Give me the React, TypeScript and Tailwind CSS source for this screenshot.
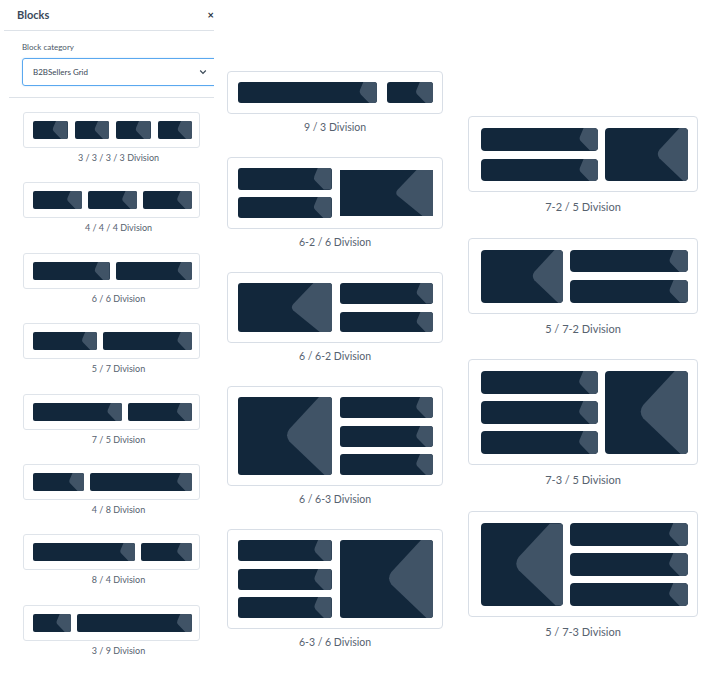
import { FC, ReactNode } from 'react';

type Tip = 'bar' | 'block' | 'wide';

const tipPaths: Record<Tip, string> = {
  bar: 'M36 0 L20 38 Q15 50 24 59 L64 100 L101 100 L101 0 Z',
  block: 'M84 0 L46 41 Q40 49 46 57 L91 100 L101 100 L101 0 Z',
  wide: 'M63 0 L22 43 Q16 50 22 56 L76 100 L101 100 L101 0 Z',
};

const Box: FC<{ tip?: Tip; className?: string }> = ({ tip = 'bar', className = '' }) => (
  <div className={`relative overflow-hidden bg-[#12273b] ${className}`}>
    <svg
      className="absolute inset-0 h-full w-full"
      viewBox="0 0 100 100"
      preserveAspectRatio="xMaxYMid meet"
    >
      <path d={tipPaths[tip]} fill="#405366" />
    </svg>
  </div>
);

const Stack: FC<{ count: number; gap: string; rounded: string; className?: string }> = ({
  count,
  gap,
  rounded,
  className = 'flex-1',
}) => (
  <div className={`flex flex-col ${gap} ${className}`}>
    {Array.from({ length: count }).map((_, i) => (
      <Box key={i} className={`flex-1 ${rounded}`} />
    ))}
  </div>
);

// flex-grow classes for the 12 column spans
const grow: Record<number, string> = {
  3: 'flex-[3]',
  4: 'flex-[4]',
  5: 'flex-[5]',
  6: 'flex-[6]',
  7: 'flex-[7]',
  8: 'flex-[8]',
  9: 'flex-[9]',
};

const SmallCard: FC<{ spans: number[]; label: string }> = ({ spans, label }) => (
  <div className="mb-[17.4px]">
    <div className="w-[177px] rounded-[3px] border border-[#dfe4ea] py-[8px] pl-[9px] pr-[7px]">
      <div className={`flex h-[18px] ${spans.length === 4 ? 'gap-[7px]' : 'gap-[6px]'}`}>
        {spans.map((s, i) => (
          <Box key={i} className={`${grow[s]} rounded-[2px]`} />
        ))}
      </div>
    </div>
    <div className="mt-[3px] text-center text-[9px] leading-[14px] text-[#56626f]">{label}</div>
  </div>
);

const MidCard: FC<{ label: string; h: string; gap?: string; children: ReactNode }> = ({
  label,
  h,
  gap = 'gap-[8px]',
  children,
}) => (
  <div className="mb-[22px]">
    <div className="rounded-[4px] border border-[#d8dee6] py-[10px] pl-[10px] pr-[9px]">
      <div className={`flex ${gap} ${h}`}>{children}</div>
    </div>
    <div className="mt-[5px] text-center text-[10.5px] leading-[16px] text-[#56626f]">{label}</div>
  </div>
);

const BigCard: FC<{ label: string; h: string; children: ReactNode }> = ({ label, h, children }) => (
  <div className="mb-[22.5px]">
    <div className="rounded-[4px] border border-[#d8dee6] pt-[11px] pb-[10px] pl-[12px] pr-[9px]">
      <div className={`flex gap-[7px] ${h}`}>{children}</div>
    </div>
    <div className="mt-[6px] text-center text-[11px] leading-[17px] text-[#56626f]">{label}</div>
  </div>
);

const smallItems: { spans: number[]; label: string }[] = [
  { spans: [3, 3, 3, 3], label: '3 / 3 / 3 / 3 Division' },
  { spans: [4, 4, 4], label: '4 / 4 / 4 Division' },
  { spans: [6, 6], label: '6 / 6 Division' },
  { spans: [5, 7], label: '5 / 7 Division' },
  { spans: [7, 5], label: '7 / 5 Division' },
  { spans: [4, 8], label: '4 / 8 Division' },
  { spans: [8, 4], label: '8 / 4 Division' },
  { spans: [3, 9], label: '3 / 9 Division' },
];

export default function App() {
  return (
    <div className="flex h-[675px] w-[714px] overflow-hidden bg-white font-[Lato,sans-serif] text-[#3a4856]">
      {/* sidebar */}
      <aside className="w-[214px] shrink-0 overflow-hidden">
        <div className="ml-[4px] flex h-[31px] items-center justify-between border-b border-[#dde2e8] pl-[13px]">
          <span className="text-[11px] font-bold text-[#3b4a5b]">Blocks</span>
          <span className="text-[11px] font-bold text-[#2b3440]">×</span>
        </div>
        <div className="pl-[22px] pt-[10px]">
          <div className="text-[8px] leading-[12px] text-[#4a5866]">Block category</div>
          <div className="mt-[5px] flex h-[28px] w-[200px] items-center justify-between rounded-[3px] border border-[#5aa8ef] pl-[10px] pr-[14px] shadow-[0_0_2px_rgba(90,168,239,0.35)]">
            <span className="text-[8px] text-[#3a4856]">B2BSellers Grid</span>
            <svg width="8" height="6" viewBox="0 0 8 6" fill="none">
              <path d="M1.2 1.5 L4 4.3 L6.8 1.5" stroke="#3a4856" strokeWidth="1.2" />
            </svg>
          </div>
        </div>
        <div className="ml-[9px] mt-[11px] border-b border-[#dde2e8]" />
        <div className="pl-[23px] pt-[14px]">
          {smallItems.map((it) => (
            <SmallCard key={it.label} spans={it.spans} label={it.label} />
          ))}
        </div>
      </aside>

      {/* medium previews */}
      <div className="ml-[13px] w-[216px] shrink-0 pt-[71px]">
        <MidCard label="9 / 3 Division" h="h-[21px]" gap="gap-[10px]">
          <Box className="flex-[9] rounded-[3px]" />
          <Box className="flex-[3] rounded-[3px]" />
        </MidCard>
        <MidCard label="6-2 / 6 Division" h="h-[50px]">
          <Stack count={2} gap="gap-[7px]" rounded="rounded-[3px]" />
          <Box tip="wide" className="my-[2px] flex-1" />
        </MidCard>
        <MidCard label="6 / 6-2 Division" h="h-[49px]">
          <Box tip="wide" className="flex-1 rounded-[3px]" />
          <Stack count={2} gap="gap-[8px]" rounded="rounded-[3px]" />
        </MidCard>
        <MidCard label="6 / 6-3 Division" h="h-[78px]">
          <Box tip="block" className="flex-1 rounded-[3px]" />
          <Stack count={3} gap="gap-[7.5px]" rounded="rounded-[3px]" />
        </MidCard>
        <MidCard label="6-3 / 6 Division" h="h-[78px]">
          <Stack count={3} gap="gap-[7.5px]" rounded="rounded-[3px]" />
          <Box tip="block" className="flex-1 rounded-[3px]" />
        </MidCard>
      </div>

      {/* large previews */}
      <div className="ml-[25px] w-[230px] shrink-0 pt-[116px]">
        <BigCard label="7-2 / 5 Division" h="h-[53px]">
          <Stack count={2} gap="gap-[8px]" rounded="rounded-[4px]" className="w-[117px]" />
          <Box tip="block" className="flex-1 rounded-[4px]" />
        </BigCard>
        <BigCard label="5 / 7-2 Division" h="h-[53px]">
          <Box tip="block" className="w-[82px] rounded-[4px]" />
          <Stack count={2} gap="gap-[8px]" rounded="rounded-[4px]" />
        </BigCard>
        <BigCard label="7-3 / 5 Division" h="h-[83px]">
          <Stack count={3} gap="gap-[7px]" rounded="rounded-[4px]" className="w-[117px]" />
          <Box tip="block" className="flex-1 rounded-[4px]" />
        </BigCard>
        <BigCard label="5 / 7-3 Division" h="h-[83px]">
          <Box tip="block" className="w-[82px] rounded-[4px]" />
          <Stack count={3} gap="gap-[7px]" rounded="rounded-[4px]" />
        </BigCard>
      </div>
    </div>
  );
}
